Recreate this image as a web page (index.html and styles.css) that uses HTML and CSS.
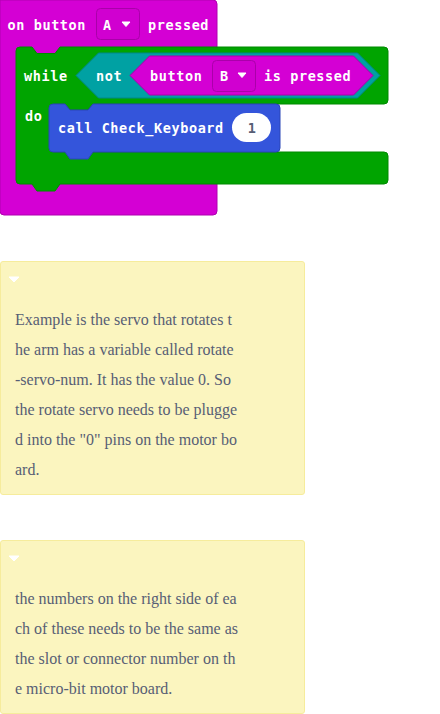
FILE: index.html
```html
<!DOCTYPE html>
<html lang="en">
<head>
<meta charset="utf-8">
<title>Blocks</title>
<link rel="stylesheet" href="styles.css">
</head>
<body>
<svg class="blocks" width="440" height="216" viewBox="0 0 440 216">
  <path class="blk-mag" d="M0,0 H213 A4,4 0 0 1 217,4 V211 A4,4 0 0 1 213,215 H4 A4,4 0 0 1 0,211 Z"/>
  <path class="blk-green" d="M20,47 H32 L37,53.5 H55 L60,47 H384 A4,4 0 0 1 388,51 V100 A4,4 0 0 1 384,104 H93 L88,110 H70 L65,104 H53 V152 H384 A4,4 0 0 1 388,156 V180 A4,4 0 0 1 384,184 H60 L55,191 H37 L32,184 H20 A4,4 0 0 1 16,180 V51 A4,4 0 0 1 20,47 Z"/>
  <path class="blk-teal" d="M76,75.5 L98.5,53 H357.5 L380,75.5 L357.5,98 H98.5 Z"/>
  <path class="blk-mag-in" d="M130,75.5 L149.5,56 H353.5 L373,75.5 L353.5,95 H149.5 Z"/>
  <path class="blk-blue" d="M53,104 H65 L70,110 H88 L93,104 H276 A4,4 0 0 1 280,108 V148 A4,4 0 0 1 276,152 H93 L88,159 H70 L65,152 H53 A4,4 0 0 1 49,148 V108 A4,4 0 0 1 53,104 Z"/>

  <rect class="dd" x="96.5" y="8.5" width="43" height="31" rx="4"/>
  <rect class="dd" x="212.5" y="60.5" width="43" height="31" rx="4"/>
  <path class="caret" d="M122,22 H130 L126,26.5 Z"/>
  <path class="caret" d="M238,73 H246 L242,77.5 Z"/>
  <rect class="oval" x="232" y="113" width="39" height="29" rx="14.5"/>

  <text class="lbl" x="7.5" y="30">on button</text>
  <text class="lbl" x="103" y="30">A</text>
  <text class="lbl" x="148" y="30">pressed</text>
  <text class="lbl" x="24" y="81">while</text>
  <text class="lbl" x="96" y="81">not</text>
  <text class="lbl" x="150" y="81">button</text>
  <text class="lbl" x="220" y="81">B</text>
  <text class="lbl" x="264" y="81">is pressed</text>
  <text class="lbl" x="25" y="121">do</text>
  <text class="lbl" x="58" y="133">call Check_Keyboard</text>
  <text class="lbl num" x="252" y="133">1</text>
</svg>

<div class="notes">
  <div class="note">
    <svg class="toggle" width="12" height="7" viewBox="0 0 12 7"><path d="M1,1 H11 L6,6 Z"/></svg>
    <div class="note-text">
      <div>Example is the servo that rotates t</div>
      <div>he arm has a variable called rotate</div>
      <div>-servo-num. It has the value 0. So</div>
      <div>the rotate servo needs to be plugge</div>
      <div>d into the "0" pins on the motor bo</div>
      <div>ard.</div>
    </div>
  </div>
  <div class="note">
    <svg class="toggle" width="12" height="7" viewBox="0 0 12 7"><path d="M1,1 H11 L6,6 Z"/></svg>
    <div class="note-text">
      <div>the numbers on the right side of ea</div>
      <div>ch of these needs to be the same as</div>
      <div>the slot or connector number on th</div>
      <div>e micro-bit motor board.</div>
    </div>
  </div>
</div>
</body>
</html>
```

FILE: styles.css
```css
html, body {
  margin: 0;
  padding: 0;
  background: #ffffff;
}

.blocks {
  display: block;
}

.blk-mag {
  fill: #d400d4;
  stroke: #b000b0;
  stroke-width: 1;
}

.blk-green {
  fill: #00a400;
  stroke: #008a00;
  stroke-width: 1;
}

.blk-teal {
  fill: #00a1a3;
  stroke: #008789;
  stroke-width: 1;
}

.blk-mag-in {
  fill: #d400d4;
  stroke: #a800a8;
  stroke-width: 1;
}

.blk-blue {
  fill: #3455db;
  stroke: #2a46b8;
  stroke-width: 1;
}

.dd {
  fill: #d000d0;
  stroke: #aa00aa;
  stroke-width: 1;
}

.caret {
  fill: #ffffff;
  stroke: #ffffff;
  stroke-width: 1;
  stroke-linejoin: round;
}

.oval {
  fill: #ffffff;
}

.lbl {
  font-family: "DejaVu Sans Mono", "Liberation Mono", monospace;
  font-weight: bold;
  font-size: 13.5px;
  letter-spacing: 0.6px;
  fill: #ffffff;
}

.num {
  fill: #575e75;
  text-anchor: middle;
}

.notes {
  margin-top: 45px;
  display: flex;
  flex-direction: column;
  gap: 45px;
}

.note {
  width: 303px;
  background: #fbf5bf;
  border: 1px solid #f6ec9c;
  border-radius: 3px;
  padding: 14px 0 9px;
}

.toggle {
  display: block;
  margin-left: 7px;
  width: 12px;
  height: 7px;
}

.toggle path {
  fill: #ffffff;
  stroke: #ffffff;
  stroke-width: 1;
  stroke-linejoin: round;
}

.note-text {
  margin-top: 22px;
  padding-left: 14px;
  font-family: "Liberation Serif", "Times New Roman", serif;
  font-size: 16px;
  line-height: 30px;
  color: #575e75;
  white-space: nowrap;
}
```
